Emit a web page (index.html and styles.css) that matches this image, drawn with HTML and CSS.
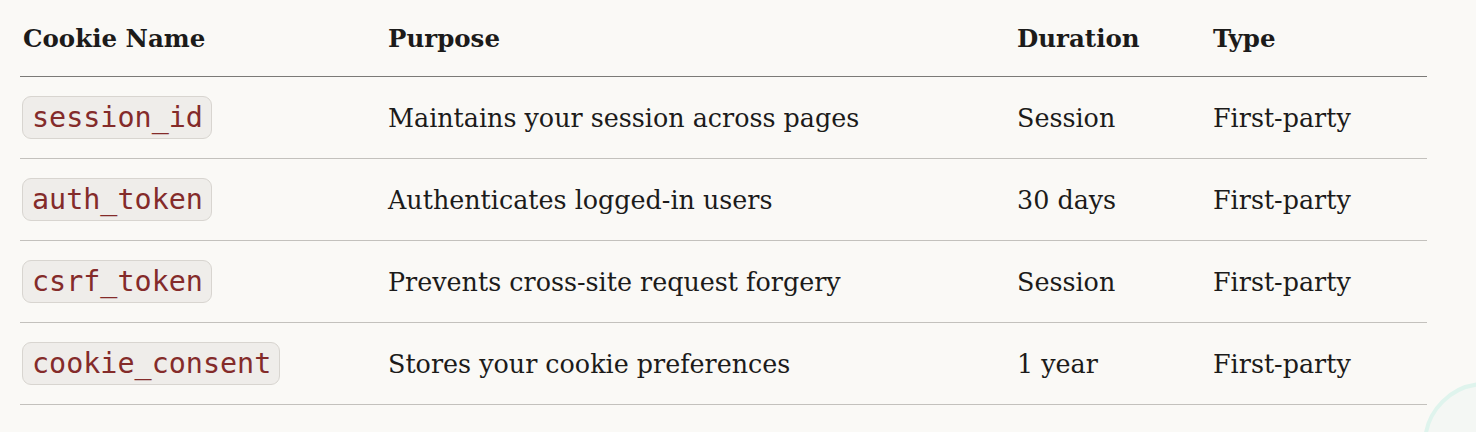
FILE: index.html
```html
<!DOCTYPE html>
<html lang="en">
<head>
<meta charset="utf-8">
<title>Cookies</title>
<link rel="stylesheet" href="styles.css">
</head>
<body>
<main class="page">
  <table class="cookie-table">
    <colgroup>
      <col class="c-name">
      <col class="c-purpose">
      <col class="c-duration">
      <col class="c-type">
    </colgroup>
    <thead>
      <tr>
        <th>Cookie Name</th>
        <th>Purpose</th>
        <th>Duration</th>
        <th>Type</th>
      </tr>
    </thead>
    <tbody>
      <tr>
        <td><code class="pill">session_id</code></td>
        <td>Maintains your session across pages</td>
        <td>Session</td>
        <td>First-party</td>
      </tr>
      <tr>
        <td><code class="pill">auth_token</code></td>
        <td>Authenticates logged-in users</td>
        <td>30 days</td>
        <td>First-party</td>
      </tr>
      <tr>
        <td><code class="pill">csrf_token</code></td>
        <td>Prevents cross-site request forgery</td>
        <td>Session</td>
        <td>First-party</td>
      </tr>
      <tr>
        <td><code class="pill">cookie_consent</code></td>
        <td>Stores your cookie preferences</td>
        <td>1 year</td>
        <td>First-party</td>
      </tr>
    </tbody>
  </table>
</main>
<div class="float-wrap" aria-hidden="true"><div class="float-btn"></div></div>
</body>
</html>
```

FILE: styles.css
```css
html, body {
  margin: 0;
  padding: 0;
  background: #faf9f6;
  overflow: hidden;
}

body {
  font-family: "DejaVu Serif", "Liberation Serif", serif;
  color: #1c1b1a;
  width: 1476px;
  height: 432px;
}

.page {
  padding: 0 49px 0 20px;
}

.cookie-table {
  width: 1407px;
  border-collapse: collapse;
  table-layout: fixed;
}

.c-name { width: 365px; }
.c-purpose { width: 629px; }
.c-duration { width: 196px; }
.c-type { width: 217px; }

.cookie-table th {
  text-align: left;
  font-weight: 700;
  font-size: 24.5px;
  height: 76px;
  padding: 0 0 0 3px;
  vertical-align: middle;
  border-bottom: 1px solid #7b7a77;
}

.cookie-table td {
  font-size: 25.4px;
  height: 81px;
  padding: 0 0 0 3px;
  vertical-align: middle;
  border-bottom: 1px solid #c3c1bd;
}

.cookie-table td:first-child {
  padding-left: 2px;
}

.pill {
  display: inline-block;
  font-family: "DejaVu Sans Mono", "Liberation Mono", monospace;
  font-size: 28.4px;
  line-height: 33px;
  color: #842b2a;
  background: #efedea;
  border: 1px solid #d8d5d0;
  border-radius: 9px;
  padding: 4px 8px 4px 9px;
}

.float-wrap {
  position: fixed;
  right: 0;
  bottom: 0;
  width: 54px;
  height: 51px;
  overflow: hidden;
}

.float-btn {
  position: absolute;
  left: 1px;
  top: 1px;
  width: 116px;
  height: 116px;
  border-radius: 50%;
  border: 4px solid #dff4ed;
  background: #f4f7f4;
}
```
